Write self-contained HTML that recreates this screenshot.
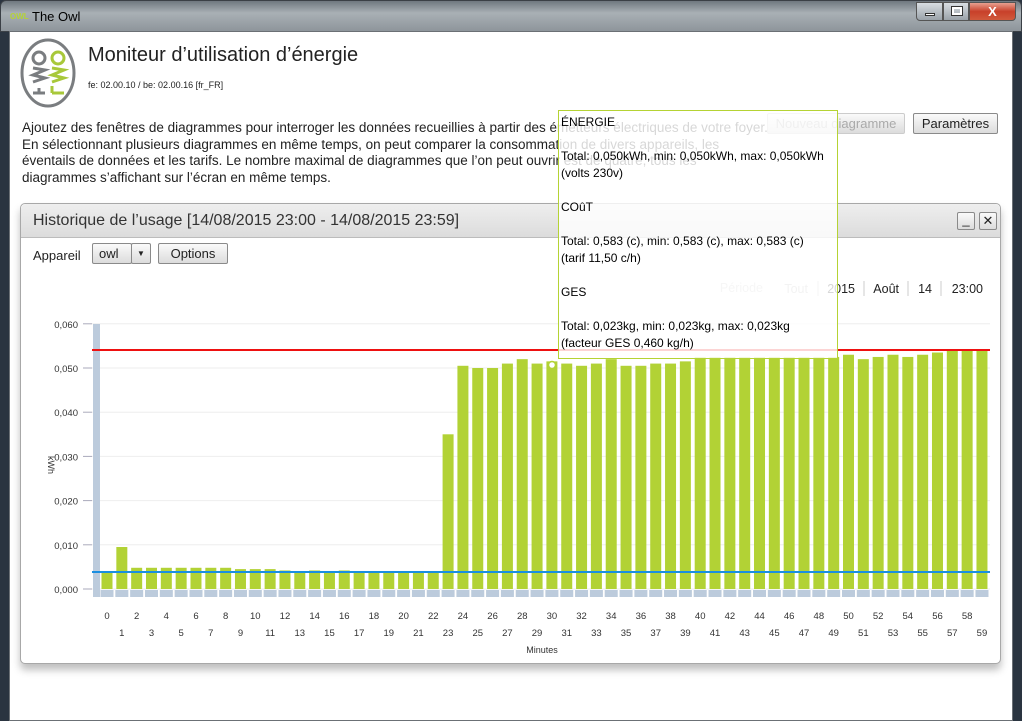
<!DOCTYPE html>
<html><head><meta charset="utf-8">
<style>
*{margin:0;padding:0;box-sizing:border-box}
body{width:1022px;height:721px;overflow:hidden;background:#2a3440;font-family:"Liberation Sans",sans-serif;position:relative}
.titlebar{position:absolute;left:0;top:0;width:1022px;height:32px;background:linear-gradient(#6f787f,#a9b0b5 40%,#8e959b);border:1px solid #3b4046;border-radius:6px 6px 0 0}
.ttl{position:absolute;left:31px;top:8px;font-size:13px;color:#000}
.owlsm{position:absolute;left:9px;top:11px;font-size:8px;color:#b5d334;font-weight:bold}
.wbtn{position:absolute;top:1px;height:19px;border:1px solid #555;background:linear-gradient(#d8dde2,#9aa2a9)}
.client{position:absolute;left:9px;top:31px;width:1004px;height:690px;background:#fff;border:1px solid #6b7075}
.abs{position:absolute}
.btn{position:absolute;height:21px;border:1px solid #8a8a8a;border-radius:2px;background:linear-gradient(#fafafa,#dcdcdc);font-size:13px;text-align:center;line-height:19px;color:#222}
.panel{position:absolute;left:20px;top:203px;width:981px;height:461px;border:1px solid #a8a8a8;border-radius:5px;background:#fff;box-shadow:0 6px 8px rgba(0,0,0,0.25)}
.phead{position:absolute;left:0;top:0;width:979px;height:34px;background:linear-gradient(#eeeeee,#dcdcdc);border-bottom:1px solid #bcbcbc;border-radius:5px 5px 0 0}
.tip{position:absolute;left:558px;top:110px;width:280px;height:249px;border:1px solid #b5d334;background:rgba(255,255,255,0.82);font-size:12px;color:#000;padding:3px 2px;line-height:17px;white-space:nowrap}
</style></head><body>
<div class="titlebar">
 <div class="owlsm">OWL</div>
 <div class="ttl">The Owl</div>
 <div class="wbtn" style="left:915px;width:27px;border-radius:0 0 0 4px"><div class="abs" style="left:8px;top:10px;width:10px;height:3px;background:#fff;border:1px solid #333"></div></div>
 <div class="wbtn" style="left:942px;width:26px"><div class="abs" style="left:8px;top:4px;width:10px;height:8px;border:2px solid #fff;outline:1px solid #333"></div></div>
 <div class="wbtn" style="left:968px;width:47px;border-radius:0 0 4px 0;background:linear-gradient(#e8a090,#c8402a 50%,#d05a3c);color:#fff;font-weight:bold;text-align:center;font-size:13px;line-height:17px">X</div>
</div>
<div class="client"></div>
<svg class="abs" style="left:20px;top:38px" width="56" height="70" viewBox="0 0 56 70">
 <ellipse cx="28" cy="35" rx="26" ry="33" fill="#fff" stroke="#7a7d80" stroke-width="3"/>
 <g fill="none" stroke-width="3">
 <circle cx="19" cy="20" r="6" stroke="#7a7d80"/>
 <path d="M13 30 L25 32 L13 37 L25 40 L13 44" stroke="#7a7d80"/>
 <path d="M13 55 L25 55 M19 55 V50" stroke="#7a7d80"/>
 <circle cx="38" cy="20" r="6" stroke="#a8c83a"/>
 <path d="M32 30 L44 32 L32 37 L44 40 L32 44" stroke="#a8c83a"/>
 <path d="M32 55 L44 55 M32 55 V48" stroke="#a8c83a"/>
 </g>
</svg>
<div class="abs" style="left:88px;top:44px;font-size:20px;color:#222">Moniteur d’utilisation d’énergie</div>
<div class="abs" style="left:88px;top:80px;font-size:9px;color:#222">fe: 02.00.10 / be: 02.00.16 [fr_FR]</div>
<div class="abs" style="left:22px;top:120px;font-size:13.5px;line-height:16.7px;color:#222;width:800px;white-space:nowrap">Ajoutez des fenêtres de diagrammes pour interroger les données recueillies à partir des émetteurs électriques de votre foyer.<br>En sélectionnant plusieurs diagrammes en même temps, on peut comparer la consommation de divers appareils, les<br>éventails de données et les tarifs. Le nombre maximal de diagrammes que l’on peut ouvrir est de quatre, tous les<br>diagrammes s’affichant sur l’écran en même temps.</div>
<div class="btn" style="left:767px;top:113px;width:138px;color:#aaa;border-color:#ccc">Nouveau diagramme</div>
<div class="btn" style="left:913px;top:113px;width:85px">Paramètres</div>
<div class="panel">
 <div class="phead">
  <div class="abs" style="left:12px;top:8px;font-size:16px;color:#333">Historique de l’usage [14/08/2015 23:00 - 14/08/2015 23:59]</div>
  <div class="btn" style="left:936px;top:8px;width:18px;height:18px;line-height:14px">_</div>
  <div class="btn" style="left:958px;top:8px;width:18px;height:18px;line-height:16px">✕</div>
 </div>
 <div class="abs" style="left:12px;top:44px;font-size:13px;color:#222">Appareil</div>
 <div class="btn" style="left:71px;top:39px;width:40px;text-align:left;padding-left:6px">owl</div>
 <div class="btn" style="left:110px;top:39px;width:20px;font-size:8px">▼</div>
 <div class="btn" style="left:137px;top:39px;width:70px">Options</div>
</div>
<svg id="ch" class="abs" style="left:0;top:0" width="1022" height="721" font-family="Liberation Sans,sans-serif"></svg>
<div class="tip">ÉNERGIE<br><br>Total: 0,050kWh, min: 0,050kWh, max: 0,050kWh<br>(volts 230v)<br><br>COûT<br><br>Total: 0,583 (c), min: 0,583 (c), max: 0,583 (c)<br>(tarif 11,50 c/h)<br><br>GES<br><br>Total: 0,023kg, min: 0,023kg, max: 0,023kg<br>(facteur GES 0,460 kg/h)</div>
<script>
var v=[.0037,.0095,.0048,.0048,.0048,.0048,.0048,.0048,.0048,.0045,.0045,.0045,.0042,.004,.0042,.004,.0042,.004,.004,.004,.004,.004,.004,.035,.0505,.050,.050,.051,.052,.051,.0515,.051,.0505,.051,.052,.0505,.0505,.051,.051,.0515,.0525,.0525,.0525,.0525,.0525,.0525,.0525,.0525,.0525,.0525,.053,.052,.0525,.053,.0525,.053,.0535,.054,.054,.054];
var s='';var y0=589,k=4420;
s+='<text x="983" y="293" font-size="12.5" text-anchor="end" fill="#222">23:00</text><text x="932" y="293" font-size="12.5" text-anchor="end" fill="#222">14</text><text x="899" y="293" font-size="12.5" text-anchor="end" fill="#222">Août</text><text x="855" y="293" font-size="12.5" text-anchor="end" fill="#222">2015</text><text x="808" y="293" font-size="12.5" text-anchor="end" fill="#bbb">Tout</text><text x="763" y="292" font-size="12.5" text-anchor="end" fill="#ccc">Période</text>';
[818,864,908,941].forEach(function(x){s+='<line x1="'+x+'" y1="281" x2="'+x+'" y2="296" stroke="#ccc"/>'});
for(var i=0;i<=6;i++){var y=y0-i*44.2;s+='<line x1="92" y1="'+y+'" x2="990" y2="'+y+'" stroke="#eee"/><line x1="83" y1="'+y+'" x2="92" y2="'+y+'" stroke="#aab"/><text x="78" y="'+(y+4)+'" font-size="9.5" text-anchor="end" fill="#333">0,0'+i+'0</text>';}
s+='<text x="48" y="456" font-size="9" fill="#333" transform="rotate(90 48 456)">kWh</text>';
s+='<rect x="93" y="324" width="7" height="273" fill="#bccbdc"/>';
for(var i=0;i<60;i++){var cx=107+i*14.83;var h=v[i]*k;
s+='<rect x="'+(cx-5.5)+'" y="'+(y0-h)+'" width="11" height="'+h+'" fill="#b2d235"/>';
s+='<rect x="'+(cx-6.5)+'" y="590" width="13" height="7" fill="#bccbdc"/>';
s+='<text x="'+cx+'" y="'+(i%2?636:619)+'" font-size="9.5" text-anchor="middle" fill="#333">'+i+'</text>';}
s+='<line x1="92" y1="350" x2="990" y2="350" stroke="#e11" stroke-width="2"/><line x1="92" y1="572" x2="990" y2="572" stroke="#1b8fe0" stroke-width="2"/>';
s+='<circle cx="552" cy="365" r="3.5" fill="#fff" stroke="#b2d235" stroke-width="1.5"/>';
s+='<text x="542" y="653" font-size="9" text-anchor="middle" fill="#333">Minutes</text>';
document.getElementById('ch').innerHTML=s;
</script>
</body></html>
